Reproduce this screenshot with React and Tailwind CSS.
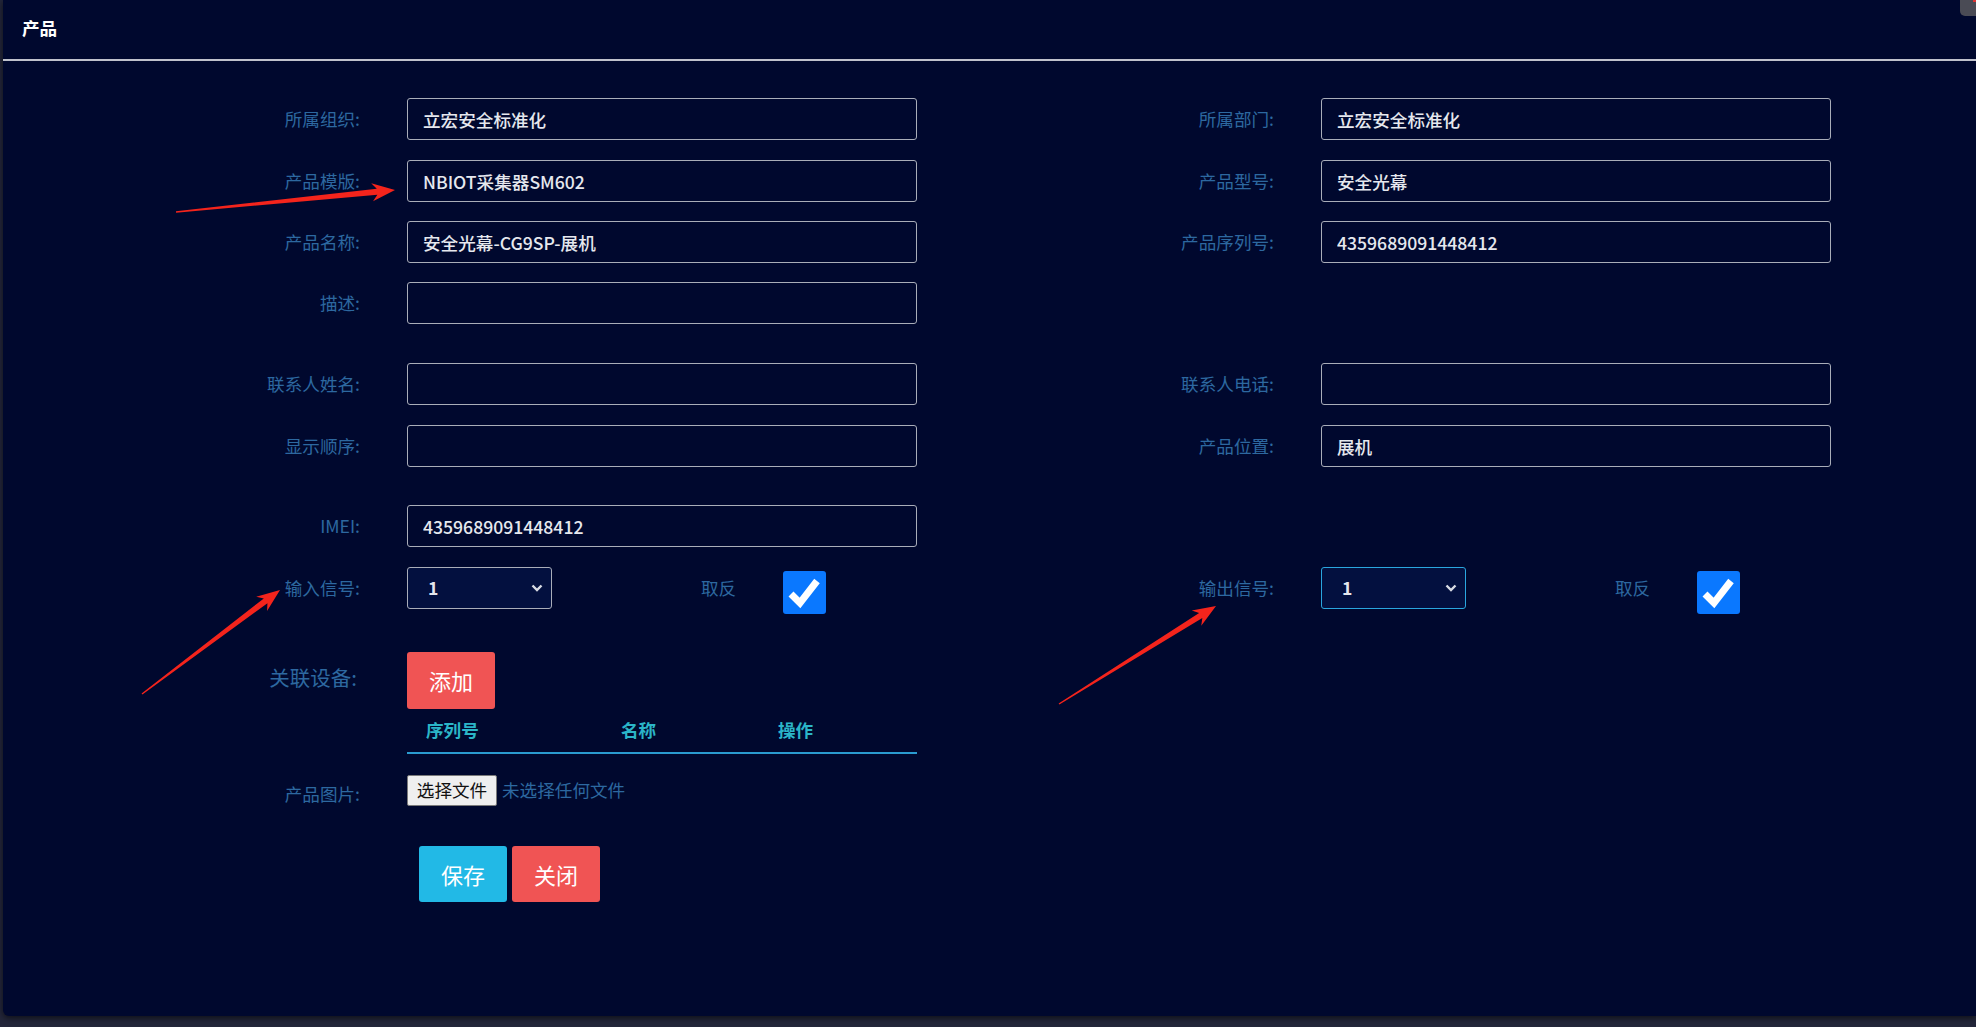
import React from 'react';

const LEFT_ROWS = [
  { left: ['所属组织', '立宏安全标准化'], right: ['所属部门', '立宏安全标准化'], mt: 'mt-0' },
  { left: ['产品模版', 'NBIOT采集器SM602'], right: ['产品型号', '安全光幕'], mt: 'mt-[20px]' },
  { left: ['产品名称', '安全光幕-CG9SP-展机'], right: ['产品序列号', '4359689091448412'], mt: 'mt-[19px]' },
  { left: ['描述', ''], right: null, mt: 'mt-[19px]' },
  { left: ['联系人姓名', ''], right: ['联系人电话', ''], mt: 'mt-[39px]' },
  { left: ['显示顺序', ''], right: ['产品位置', '展机'], mt: 'mt-[20px]' },
  { left: ['IMEI', '4359689091448412'], right: null, mt: 'mt-[38px]' },
];

// red annotation arrows drawn over the screenshot
const ARROWS = [
  [176, 212, 395, 190],
  [142, 694, 280, 590],
  [1059, 704, 1216, 606],
];

function arrowPoints(x1, y1, x2, y2) {
  const dx = x2 - x1;
  const dy = y2 - y1;
  const len = Math.hypot(dx, dy);
  const ux = dx / len;
  const uy = dy / len;
  const nx = -uy;
  const ny = ux;
  const neck = 18;
  const back = 23;
  const bx = x2 - ux * neck;
  const by = y2 - uy * neck;
  const cx = x2 - ux * back;
  const cy = y2 - uy * back;
  const pts = [
    [x1 + nx * 0.7, y1 + ny * 0.7],
    [bx + nx * 3, by + ny * 3],
    [cx + nx * 9, cy + ny * 9],
    [x2, y2],
    [cx - nx * 9, cy - ny * 9],
    [bx - nx * 3, by - ny * 3],
    [x1 - nx * 0.7, y1 - ny * 0.7],
  ];
  return pts.map((p) => p.join(',')).join(' ');
}

function Label({ children, className = '' }) {
  return (
    <div className={`w-[357px] shrink-0 text-right text-[17.6px] text-[#2d68a0] ${className}`}>
      {children}:
    </div>
  );
}

function Field({ label, value }) {
  return (
    <div className="flex w-[914px] items-center">
      <Label>{label}</Label>
      <input
        readOnly
        value={value}
        className="ml-[47px] h-[42px] w-[510px] rounded-[3px] border border-[#a9adb9] bg-transparent pl-[15px] text-[17.6px] font-medium text-[#e6e8ee] outline-none"
      />
    </div>
  );
}

function Chevron() {
  return (
    <svg width="12" height="8" viewBox="0 0 12 8" className="pointer-events-none absolute right-[9px] top-[17px]">
      <path d="M1.5 1.5 L6 6 L10.5 1.5" fill="none" stroke="#d8dbe4" strokeWidth="2.4" />
    </svg>
  );
}

function CheckBox() {
  return (
    <div className="h-[43px] w-[43px] rounded-[3px] bg-[#0a78ff]">
      <svg width="43" height="43" viewBox="0 0 43 43">
        <path d="M8 23 L17 32 L34 10" fill="none" stroke="#ffffff" strokeWidth="7" />
      </svg>
    </div>
  );
}

function SignalField({ label, focused }) {
  return (
    <div className="flex h-[42px] w-[914px] items-center">
      <Label>{label}</Label>
      <div className="relative ml-[47px] h-[42px] w-[145px]">
        <select
          defaultValue="1"
          className={`h-full w-full appearance-none rounded-[3px] border bg-[#03103f] pl-[20px] text-[17.6px] font-semibold text-[#e4e6ec] outline-none ${
            focused ? 'border-[#2aa6de]' : 'border-[#a9adb9]'
          }`}
        >
          <option value="1">1</option>
          <option value="2">2</option>
        </select>
        <Chevron />
      </div>
      <div className="ml-[149px] w-[82px] text-[17.6px] text-[#2d68a0]">取反</div>
      <div className="mt-[9px]">
        <CheckBox />
      </div>
    </div>
  );
}

export default function App() {
  return (
    <div className="relative h-[1027px] w-[1976px] overflow-hidden bg-[#23263a] font-['Noto_Sans_CJK_SC',sans-serif]">
      <div className="ml-[3px] h-[1016px] rounded-bl-[6px] bg-[#00082e] shadow-[0_2px_6px_rgba(0,0,0,0.6)]">
        <div className="flex h-[59px] items-center pl-[19px] pb-[3px] text-[17.6px] font-bold text-white">产品</div>
        <div className="h-[2px] bg-[#bfc1cc]" />

        <div className="pt-[37px]">
          {LEFT_ROWS.map((row, i) => (
            <div key={i} className={`flex ${row.mt}`}>
              <Field label={row.left[0]} value={row.left[1]} />
              {row.right && <Field label={row.right[0]} value={row.right[1]} />}
            </div>
          ))}

          <div className="mt-[20px] flex">
            <SignalField label="输入信号" />
            <SignalField label="输出信号" focused />
          </div>

          <div className="mt-[43px] flex items-center">
            <div className="w-[357px] shrink-0 pr-[3px] pb-[6px] text-right text-[20.5px] text-[#2d68a0]">关联设备:</div>
            <button
              type="button"
              className="ml-[47px] h-[57px] w-[88px] rounded-[3px] bg-[#f05454] text-[22px] text-white"
            >
              添加
            </button>
          </div>

          <div className="ml-[404px] w-[510px]">
            <div className="grid h-[45px] grid-cols-[195px_157px_1fr] items-center border-b-2 border-[#2a9bd0] pl-[19px] text-[17.6px] font-bold text-[#2bb5c8]">
              <div>序列号</div>
              <div>名称</div>
              <div>操作</div>
            </div>
          </div>

          <div className="mt-[21px] flex items-start">
            <div className="w-[357px] shrink-0 pt-[6px] text-right text-[17.6px] text-[#2d68a0]">产品图片:</div>
            <div className="ml-[47px] flex items-center">
              <div className="flex h-[31px] w-[90px] items-center justify-center rounded-[2px] border border-[#7a7a7a] bg-[#efefef] text-[17.6px] text-[#111111]">
                选择文件
              </div>
              <div className="ml-[5px] text-[17.6px] text-[#2d68a0]">未选择任何文件</div>
            </div>
          </div>

          <div className="ml-[416px] mt-[39px] flex gap-[5px]">
            <button type="button" className="h-[56px] w-[88px] rounded-[3px] bg-[#22b9e6] text-[22px] text-white">
              保存
            </button>
            <button type="button" className="h-[56px] w-[88px] rounded-[3px] bg-[#f05454] text-[22px] text-white">
              关闭
            </button>
          </div>
        </div>
      </div>

      <div className="absolute right-0 top-0 h-[16px] w-[16px] rounded-bl-[5px] bg-[#4a4b55]">
        <div className="absolute right-0 top-0 h-[2px] w-[3px] bg-[#d33]" />
      </div>

      <svg className="pointer-events-none absolute left-0 top-0" width="1976" height="1027" viewBox="0 0 1976 1027">
        {ARROWS.map((a, i) => (
          <polygon key={i} points={arrowPoints(...a)} fill="#f4241c" />
        ))}
      </svg>
    </div>
  );
}
